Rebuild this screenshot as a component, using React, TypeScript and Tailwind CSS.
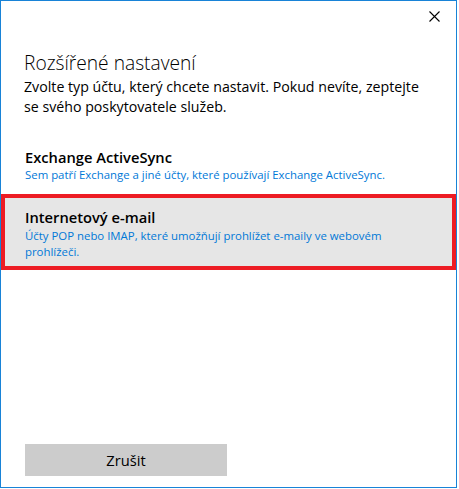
const font = { fontFamily: '"Segoe UI", "Open Sans", "Noto Sans", sans-serif' }

const CloseIcon = () => (
  <svg width="11" height="11" viewBox="0 0 11 11" className="block">
    <path d="M0.5 0.5 L10.5 10.5 M10.5 0.5 L0.5 10.5" stroke="#000" strokeWidth="1.1" fill="none" />
  </svg>
)

const accounts = [
  {
    title: 'Exchange ActiveSync',
    desc: 'Sem patří Exchange a jiné účty, které používají Exchange ActiveSync.',
    selected: false,
  },
  {
    title: 'Internetový e-mail',
    desc: 'Účty POP nebo IMAP, které umožňují prohlížet e-maily ve webovém prohlížeči.',
    selected: true,
  },
]

const App = () => {
  return (
    <div className="w-[459px] h-[489px] bg-white" style={font}>
      <div className="w-[457px] h-[488px] border border-[#1883d7] flex flex-col">
        <div className="flex justify-end pt-[10px] pr-[16px]">
          <button className="p-0">
            <CloseIcon />
          </button>
        </div>

        <div className="pl-[23px] pr-[32px] pt-[28px]">
          <h1 className="text-[19.2px] font-light leading-[26px] text-black">Rozšířené nastavení</h1>
          <p className="text-[14.2px] leading-[20px] text-black mt-[1px]">
            Zvolte typ účtu, který chcete nastavit. Pokud nevíte, zeptejte se svého poskytovatele služeb.
          </p>
        </div>

        <div className="mt-[22px] flex flex-col">
          {accounts.map((a) =>
            a.selected ? (
              <div key={a.title} className="border-[4px] border-[#ed1c24] bg-[#e6e6e6] pl-[20px] pr-[40px] pt-[9px] pb-[6px]">
                <div className="text-[14.7px] font-semibold leading-[20px] text-black">{a.title}</div>
                <div className="text-[11.4px] leading-[16px] text-[#0078d7] mt-[1px]">{a.desc}</div>
              </div>
            ) : (
              <div key={a.title} className="pl-[24px] pr-[40px] pt-[8px] pb-[11px]">
                <div className="text-[14.7px] font-semibold leading-[20px] text-black">{a.title}</div>
                <div className="text-[11.4px] leading-[16px] text-[#0078d7]">{a.desc}</div>
              </div>
            )
          )}
        </div>

        <div className="mt-auto pl-[24px] pb-[11px]">
          <button className="w-[202px] h-[32px] bg-[#cccccc] text-[14.7px] text-black">Zrušit</button>
        </div>
      </div>
    </div>
  )
}

export default App
